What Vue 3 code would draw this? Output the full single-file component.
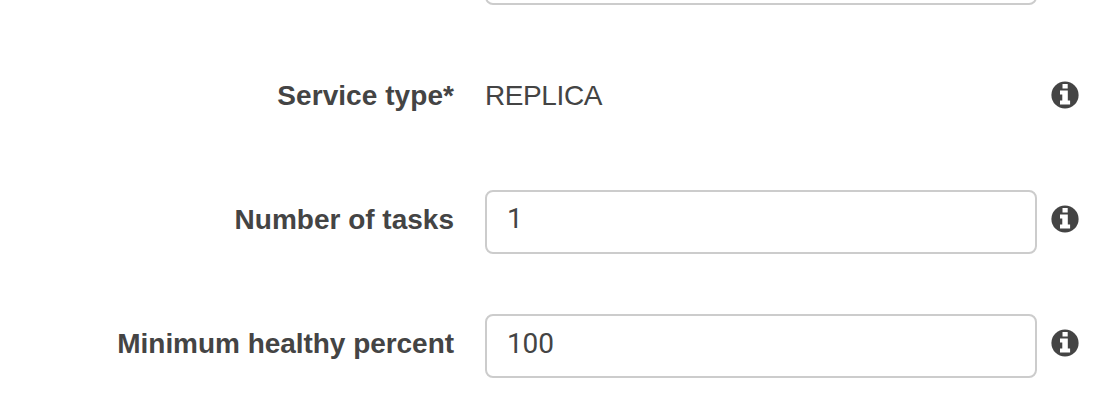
<script setup>
const fields = [
  { label: 'Service type*', value: 'REPLICA', fixed: true },
  { label: 'Number of tasks', value: '1' },
  { label: 'Minimum healthy percent', value: '100' },
]
</script>

<template>
  <main class="form">
    <div class="box cut"></div>
    <div v-for="(f, i) in fields" :key="f.label" class="row">
      <label class="label" :class="{ first: i === 0, last: i === 2 }">{{ f.label }}</label>
      <span v-if="f.fixed" class="static">{{ f.value }}</span>
      <div v-else class="box" :class="{ last: i === 2 }">{{ f.value }}</div>
      <svg class="info" viewBox="0 0 28 28">
        <circle cx="14" cy="14" r="13.6" fill="#444" />
        <path fill="#fff" d="M11.5 3h5.2v4.6h-5.2zM9 9.5h7.8v10h2.3v3.9H9v-3.9h2.3v-6H9z" />
      </svg>
    </div>
  </main>
</template>

<style scoped>
.form {
  width: 1120px;
  height: 408px;
  overflow: hidden;
  background: #fff;
  color: #444;
  font: 28px/40px "Liberation Sans", Arial, sans-serif;
}
.row {
  display: grid;
  grid-template-columns: 454px 552px 28px;
  column-gap: 31px;
  align-items: start;
  height: 64px;
  margin-bottom: 60px;
}
.label {
  padding-top: 10px;
  text-align: right;
  font-weight: 700;
}
.label.first {
  letter-spacing: 0.06px;
}
.label.last {
  letter-spacing: -0.04px;
}
.box {
  box-sizing: border-box;
  width: 552px;
  height: 64px;
  border: 2px solid #ccc;
  border-radius: 8px;
  padding: 7px 20px;
  font-family: Roboto, "Liberation Sans", sans-serif;
  letter-spacing: -0.15px;
}
.box.last {
  padding-top: 8px;
}
.cut {
  margin: -59px 0 61px 485px;
}
.static {
  padding-top: 10px;
  letter-spacing: -0.4px;
}
.info {
  width: 28px;
  height: 28px;
  margin: 15px 0 0 -17px;
}
</style>
<style>
body { background: #fff; }
</style>
